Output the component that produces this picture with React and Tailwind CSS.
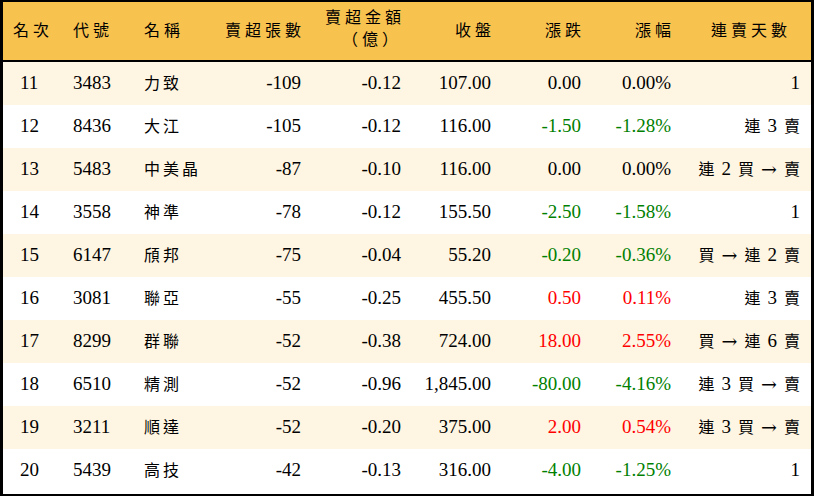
import React from 'react';

const rows = [
  ['11', '3483', '力致', '-109', '-0.12', '107.00', '0.00', '0.00%', '1', 0],
  ['12', '8436', '大江', '-105', '-0.12', '116.00', '-1.50', '-1.28%', '連 3 賣', -1],
  ['13', '5483', '中美晶', '-87', '-0.10', '116.00', '0.00', '0.00%', '連 2 買 → 賣', 0],
  ['14', '3558', '神準', '-78', '-0.12', '155.50', '-2.50', '-1.58%', '1', -1],
  ['15', '6147', '頎邦', '-75', '-0.04', '55.20', '-0.20', '-0.36%', '買 → 連 2 賣', -1],
  ['16', '3081', '聯亞', '-55', '-0.25', '455.50', '0.50', '0.11%', '連 3 賣', 1],
  ['17', '8299', '群聯', '-52', '-0.38', '724.00', '18.00', '2.55%', '買 → 連 6 賣', 1],
  ['18', '6510', '精測', '-52', '-0.96', '1,845.00', '-80.00', '-4.16%', '連 3 買 → 賣', -1],
  ['19', '3211', '順達', '-52', '-0.20', '375.00', '2.00', '0.54%', '連 3 買 → 賣', 1],
  ['20', '5439', '高技', '-42', '-0.13', '316.00', '-4.00', '-1.25%', '1', -1],
];

const font = { fontFamily: '"Liberation Serif", "Noto Sans CJK TC", serif' };

function changeColor(dir) {
  if (dir > 0) return 'text-[#ff0000]';
  if (dir < 0) return 'text-[#008000]';
  return 'text-black';
}

function Streak({ text }) {
  return (
    <div className="flex items-center justify-end gap-[7px]">
      {text.split(' ').map((tok, i) => {
        if (tok === '→') {
          return (
            <span key={i} className="text-[19px]" style={{ fontFamily: '"DejaVu Serif", serif' }}>
              →
            </span>
          );
        }
        if (/^\d+$/.test(tok)) return <span key={i}>{tok}</span>;
        return (
          <span key={i} className="text-[16px]">
            {tok}
          </span>
        );
      })}
    </div>
  );
}

export default function App() {
  return (
    <div
      className="w-[814px] h-[496px] border-t-2 border-b-2 border-l-[3px] border-r-[3px] border-black bg-white text-black"
      style={font}
    >
      <div className="flex h-[60px] items-center bg-[#f8c24f] border-b-2 border-black text-[16px] tracking-[4px]">
        <div className="w-[60px] pl-[10px]">名次</div>
        <div className="w-[71px] pl-[10px]">代號</div>
        <div className="w-[77px] pl-[10px]">名稱</div>
        <div className="w-[100px] pr-[6px] text-right">賣超張數</div>
        <div className="w-[100px] pr-[6px] text-right leading-[22px] -mt-[4px]">
          <div>賣超金額</div>
          <div className="pr-[3px]">（億）</div>
        </div>
        <div className="w-[90px] pr-[6px] text-right">收盤</div>
        <div className="w-[90px] pr-[6px] text-right">漲跌</div>
        <div className="w-[90px] pr-[6px] text-right">漲幅</div>
        <div className="w-[130px] pr-[20px] text-right">連賣天數</div>
      </div>
      {rows.map((r, i) => (
        <div
          key={r[0]}
          className={`flex h-[43px] items-center text-[19px] ${i % 2 === 0 ? 'bg-[#fef5e2]' : 'bg-white'}`}
        >
          <div className="w-[60px] pl-[17px]">{r[0]}</div>
          <div className="w-[71px] pl-[10px]">{r[1]}</div>
          <div className="w-[77px] pl-[10px] text-[16px] tracking-[3px]">{r[2]}</div>
          <div className="w-[100px] pr-[10px] text-right">{r[3]}</div>
          <div className="w-[100px] pr-[10px] text-right">{r[4]}</div>
          <div className="w-[90px] pr-[10px] text-right">{r[5]}</div>
          <div className={`w-[90px] pr-[10px] text-right ${changeColor(r[9])}`}>{r[6]}</div>
          <div className={`w-[90px] pr-[10px] text-right ${changeColor(r[9])}`}>{r[7]}</div>
          <div className="w-[130px] pr-[11px]">
            <Streak text={r[8]} />
          </div>
        </div>
      ))}
    </div>
  );
}
